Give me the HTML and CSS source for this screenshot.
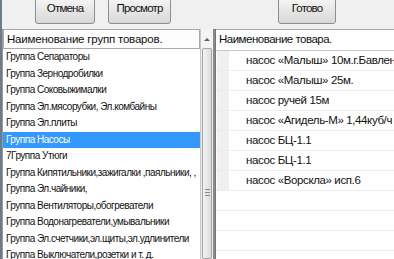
FILE: index.html
```html
<!DOCTYPE html>
<html lang="ru">
<head>
    <meta charset="UTF-8">
    <title>Выбор товара</title>
    <link rel="stylesheet" href="styles.css">
</head>
<body>
    <div class="toolbar">
        <div class="btn-group">
            <button class="btn btn-cancel">Отмена</button>
            <button class="btn btn-preview">Просмотр</button>
        </div>
        <button class="btn btn-done">Готово</button>
    </div>

    <div class="panes">
        <!-- Группы товаров -->
        <div class="pane-left">
            <div class="list">
                <div class="list-head">Наименование групп товаров.</div>
                <div class="row">Группа Сепараторы</div>
                <div class="row">Группа Зернодробилки</div>
                <div class="row">Группа Соковыжималки</div>
                <div class="row">Группа Эл.мясорубки, Эл.комбайны</div>
                <div class="row">Группа Эл.плиты</div>
                <div class="row selected">Группа Насосы</div>
                <div class="row">7Группа Утюги</div>
                <div class="row">Группа Кипятильники,зажигалки ,паяльники, ,</div>
                <div class="row">Группа Эл.чайники,</div>
                <div class="row">Группа Вентиляторы,обогреватели</div>
                <div class="row">Группа Водонагреватели,умывальники</div>
                <div class="row">Группа Эл.счетчики,эл.щиты,эл.удлинители</div>
                <div class="row">Группа Выключатели,розетки и т. д.</div>
            </div>
            <div class="scrollbar">
                <div class="scroll-arrow"></div>
                <div class="scroll-thumb"><span class="grip"></span></div>
            </div>
        </div>

        <!-- Товары -->
        <div class="pane-right">
            <div class="table-head">Наименование товара.</div>
            <div class="item"><span class="mark"></span>насос «Малыш» 10м.г.Бавлены</div>
            <div class="item"><span class="mark"></span>насос «Малыш» 25м.</div>
            <div class="item"><span class="mark"></span>насос ручей 15м</div>
            <div class="item"><span class="mark"></span>насос «Агидель-М» 1,44куб/ч</div>
            <div class="item"><span class="mark"></span>насос БЦ-1.1</div>
            <div class="item"><span class="mark"></span>насос БЦ-1.1</div>
            <div class="item"><span class="mark"></span>насос «Ворскла» исп.6</div>
            <div class="item empty"></div>
            <div class="item empty"></div>
            <div class="item empty"></div>
        </div>
    </div>
</body>
</html>
```

FILE: styles.css
```css
/* Окно выбора товара */
body {
    margin: 0;
    width: 394px;
    height: 259px;
    overflow: hidden;
    background: #f0f0f0;
    font-family: "Liberation Sans", Arial, sans-serif;
    font-size: 10px;
    letter-spacing: -0.5px;
    color: #111;
}

.toolbar {
    height: 29px;
    display: flex;
    align-items: flex-start;
    border-left: 2px solid #6d7a88;
}

.btn-group {
    display: flex;
    gap: 13px;
    padding-left: 33px;
    width: 243px;
}

.btn {
    margin-top: -3px;
    height: 27px;
    padding: 0 0 5px;
    border: 1px solid #8e8e8e;
    border-radius: 3px;
    background: linear-gradient(#f6f6f6, #e6e6e6 50%, #d8d8d8);
    font-family: "Liberation Sans", Arial, sans-serif;
    font-size: 11.5px;
    letter-spacing: -0.8px;
    color: #111;
}

.btn-cancel { width: 60px; }
.btn-preview { width: 63px; }
.btn-done { width: 58px; }

.panes {
    display: flex;
    height: 230px;
    border-left: 2px solid #6d7a88;
}

.pane-left {
    display: flex;
    width: 213px;
    border-right: 2px solid #8a8a8a;
}

.list {
    width: 197px;
    background: #fff;
    border-left: 1px solid #9a9a9a;
}

.list-head {
    height: 18px;
    line-height: 18px;
    padding-left: 3px;
    font-size: 11.5px;
    letter-spacing: -0.2px;
    border: 1px solid #a8a8a8;
    background: #fdfdfd;
    white-space: nowrap;
    overflow: hidden;
}

.row {
    height: 16.5px;
    line-height: 16.5px;
    padding-left: 3px;
    white-space: nowrap;
    overflow: hidden;
}

.row.selected {
    background: #3399ff;
    color: #fff;
}

.scrollbar {
    width: 12px;
    display: flex;
    flex-direction: column;
    background: #ececec;
    border-left: 1px solid #c8c8c8;
}

.scroll-arrow {
    height: 19px;
    position: relative;
    background: #f4f4f4;
}

.scroll-arrow::after {
    content: "";
    position: absolute;
    left: 3px;
    top: 6px;
    border: 3px solid transparent;
    border-bottom: 3px solid #606060;
}

.scroll-thumb {
    flex: 1;
    margin: 0 1px;
    border: 1px solid #a4a4a4;
    border-radius: 2px;
    background: linear-gradient(90deg, #f2f2f2, #dcdcdc);
    position: relative;
}

.grip {
    position: absolute;
    left: 2px;
    top: 140px;
    width: 5px;
    height: 5px;
    border-top: 1px solid #888;
    border-bottom: 1px solid #888;
}

.grip::after {
    content: "";
    position: absolute;
    left: 0;
    right: 0;
    top: 2px;
    border-top: 1px solid #888;
}

.pane-right {
    flex: 1;
    background: #fff;
    border-left: 1px solid #777;
}

.table-head {
    height: 20px;
    line-height: 19px;
    padding-left: 3px;
    font-size: 11.5px;
    letter-spacing: -0.5px;
    border-top: 1px solid #a8a8a8;
    border-bottom: 1px solid #c8c8c8;
    white-space: nowrap;
}

.item {
    height: 19px;
    line-height: 19px;
    display: flex;
    align-items: stretch;
    border-bottom: 1px solid #ececec;
    white-space: nowrap;
    font-size: 11.5px;
    letter-spacing: -0.38px;
}

.mark {
    width: 12px;
    margin-left: 1px;
    margin-right: 17px;
    background: #f0f0f0;
}
```
